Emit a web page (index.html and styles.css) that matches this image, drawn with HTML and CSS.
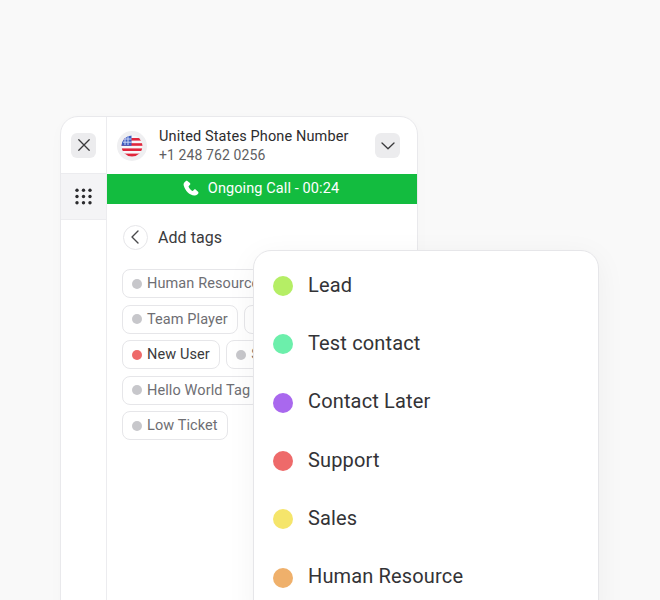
FILE: index.html
```html
<!DOCTYPE html>
<html lang="en">
<head>
<meta charset="utf-8">
<title>Add tags</title>
<link rel="stylesheet" href="styles.css">
</head>
<body>
<div class="stage">
  <div class="app">
    <aside class="side">
      <div class="side-top">
        <button class="square"><svg width="12" height="12" viewBox="0 0 12 12"><path d="M.8.8l10.4 10.4M11.200.8L.8 11.200" fill="none" stroke="#3a3a3c" stroke-width="1.300" stroke-linecap="round"/></svg></button>
      </div>
      <div class="side-grid">
        <svg width="17" height="17" viewBox="0 0 17 17" fill="#2b2b2e"><circle cx="2" cy="2.200" r="1.700"/><circle cx="8.500" cy="2.200" r="1.700"/><circle cx="15" cy="2.200" r="1.700"/><circle cx="2" cy="8.500" r="1.700"/><circle cx="8.500" cy="8.500" r="1.700"/><circle cx="15" cy="8.500" r="1.700"/><circle cx="2" cy="14.800" r="1.700"/><circle cx="8.500" cy="14.800" r="1.700"/><circle cx="15" cy="14.800" r="1.700"/></svg>
      </div>
    </aside>
    <main class="main">
      <header class="head">
        <div class="flag-wrap">
          <svg width="22" height="22" viewBox="0 0 22 22">
            <defs><clipPath id="c"><circle cx="11" cy="11" r="10.500"/></clipPath></defs>
            <g clip-path="url(#c)">
              <rect width="22" height="22" fill="#f7f7f9"/>
              <rect y="3" width="22" height="2.600" fill="#e0263c"/>
              <rect y="8.200" width="22" height="2.600" fill="#e0263c"/>
              <rect y="13.400" width="22" height="2.600" fill="#e0263c"/>
              <rect y="18.600" width="22" height="3.400" fill="#e0263c"/>
              <rect width="10.500" height="10.800" fill="#3d5cc0"/>
              <path d="M4 1v9M7 1v9M2 4h8.500M2 7.200h8.500" stroke="#c9d4f5" stroke-width="1"/>
            </g>
          </svg>
        </div>
        <div class="num">
          <div class="num-title">United States Phone Number</div>
          <div class="num-sub">+1 248 762 0256</div>
        </div>
        <button class="square"><svg width="14" height="8" viewBox="0 0 14 8"><path d="M1 1l6 5.800L13 1" fill="none" stroke="#3a3a3c" stroke-width="1.300" stroke-linecap="round" stroke-linejoin="round"/></svg></button>
      </header>
      <div class="call">
        <svg width="16" height="16" viewBox="0 0 24 24"><path fill="#fff" d="M6.600 1.600c-.7-.7-1.900-.6-2.600.1L2.300 3.400C1 4.700.6 6.600 1.100 8.400c1.200 4.200 3.200 7.600 6.100 10.500 2.900 2.800 6.200 4.100 9.800 4.400 1.700.1 3.300-.4 4.500-1.600l1.100-1.100c.8-.8.8-2 0-2.800l-3.300-3.300c-.8-.8-2-.8-2.800 0l-1.500 1.500c-.5.5-1.200.5-1.700.2-1.200-.8-2.200-1.800-3.100-2.900-.8-1-1.400-2-1.800-3-.2-.5-.1-1 .3-1.400l1.700-1.700c.8-.8.8-2 0-2.800z"/></svg>
        <span>Ongoing Call - 00:24</span>
      </div>
      <section class="body">
        <div class="title-row">
          <button class="back"><svg width="8" height="14" viewBox="0 0 8 14"><path d="M7 1L1 7l6 6" fill="none" stroke="#48484a" stroke-width="1.400" stroke-linecap="round" stroke-linejoin="round"/></svg></button>
          <span class="title">Add tags</span>
        </div>
        <div class="tags">
          <div class="tag"><i class="pip"></i>Human Resource</div>
          <div class="tag-line">
            <div class="tag"><i class="pip"></i>Team Player</div>
            <div class="tag"><i class="pip"></i>Sales</div>
          </div>
          <div class="tag-line">
            <div class="tag on"><i class="pip red"></i>New User</div>
            <div class="tag"><i class="pip"></i>Support</div>
          </div>
          <div class="tag"><i class="pip"></i>Hello World Tag</div>
          <div class="tag"><i class="pip"></i>Low Ticket</div>
        </div>
      </section>
    </main>
  </div>
  <ul class="pop">
    <li class="opt"><i class="dot lead"></i>Lead</li>
    <li class="opt"><i class="dot test"></i>Test contact</li>
    <li class="opt"><i class="dot later"></i>Contact Later</li>
    <li class="opt"><i class="dot support"></i>Support</li>
    <li class="opt"><i class="dot sales"></i>Sales</li>
    <li class="opt"><i class="dot hr"></i>Human Resource</li>
  </ul>
</div>
</body>
</html>
```
FILE: styles.css
```css
* { box-sizing: border-box; }
html, body { margin: 0; height: 100%; }
body { background: #f9f9f9; font-family: Roboto, "Liberation Sans", sans-serif; overflow: hidden; }
.stage { position: relative; width: 660px; height: 600px; overflow: hidden; padding: 116px 0 0 60px; }
.app { width: 358px; height: 520px; background: #fff; border: 1px solid #e9e9ec; border-radius: 18px; display: flex; overflow: hidden; box-shadow: 0 4px 16px rgba(0,0,0,.02); }
.side { width: 46px; flex: none; border-right: 1px solid #ececef; }
.side-top { height: 56px; display: flex; align-items: center; justify-content: center; }
.side-grid { height: 47px; background: #f4f4f6; border-top: 1px solid #ececef; border-bottom: 1px solid #ececef; display: flex; align-items: center; justify-content: center; }
.square { width: 25px; height: 25px; padding: 0; border: 0; border-radius: 6px; background: #ececee; display: flex; align-items: center; justify-content: center; }
.main { flex: 1; min-width: 0; }
.head { height: 57px; display: flex; align-items: center; padding: 0 17px 0 10px; }
.flag-wrap { width: 30px; height: 30px; border-radius: 50%; background: #efeff1; display: flex; align-items: center; justify-content: center; flex: none; }
.num { flex: 1; margin-left: 12px; }
.num-title { font-size: 14.5px; line-height: 20px; letter-spacing: .12px; color: #2c2c2e; }
.num-sub { font-size: 14px; line-height: 19px; color: #5f5f63; letter-spacing: .1px; margin-top: -1px; }
.call { height: 30px; padding: 0 2px 2px 0; background: #13bc3f; color: #fff; font-size: 14.5px; letter-spacing: .1px; display: flex; align-items: center; justify-content: center; gap: 9px; }
.body { padding: 20px 15px; }
.title-row { display: flex; align-items: center; gap: 10px; height: 26px; padding-left: 1px; }
.back { width: 25px; height: 25px; padding: 0 2px 0 0; border: 1px solid #e6e6e9; border-radius: 50%; background: #fff; display: flex; align-items: center; justify-content: center; }
.title { font-size: 16px; letter-spacing: .05px; color: #3a3a3c; }
.tags { margin-top: 19.4px; display: flex; flex-direction: column; align-items: flex-start; gap: 6.5px; }
.tag-line { display: flex; gap: 6.5px; }
.tag { height: 29px; padding: 0 9px; border: 1px solid #e6e6e9; border-radius: 8px; display: flex; align-items: center; gap: 5px; font-size: 14.5px; letter-spacing: .1px; color: #6e6e73; white-space: nowrap; background: #fff; }
.tag.on { color: #3a3a3c; }
.pip { width: 10px; height: 10px; border-radius: 50%; background: #c7c7cb; flex: none; }
.pip.red { background: #ee6a6a; }
.pop { position: absolute; left: 253px; top: 250px; width: 346px; height: 380px; margin: 0; padding: 6px 0 0 19px; list-style: none; background: #fff; border: 1px solid #e6e6e9; border-radius: 18px; box-shadow: 0 6px 30px rgba(0,0,0,.05); }
.opt { height: 58.3px; padding-bottom: 2.6px; display: flex; align-items: center; gap: 15px; font-size: 20px; letter-spacing: .15px; color: #333336; }
.dot { width: 20px; height: 20px; margin-top: 2.6px; border-radius: 50%; flex: none; }
.lead { background: #b5ee65; }
.test { background: #6cefab; }
.later { background: #a968ee; }
.support { background: #ee6a6a; }
.sales { background: #f5e56b; }
.hr { background: #efb06b; }
```
